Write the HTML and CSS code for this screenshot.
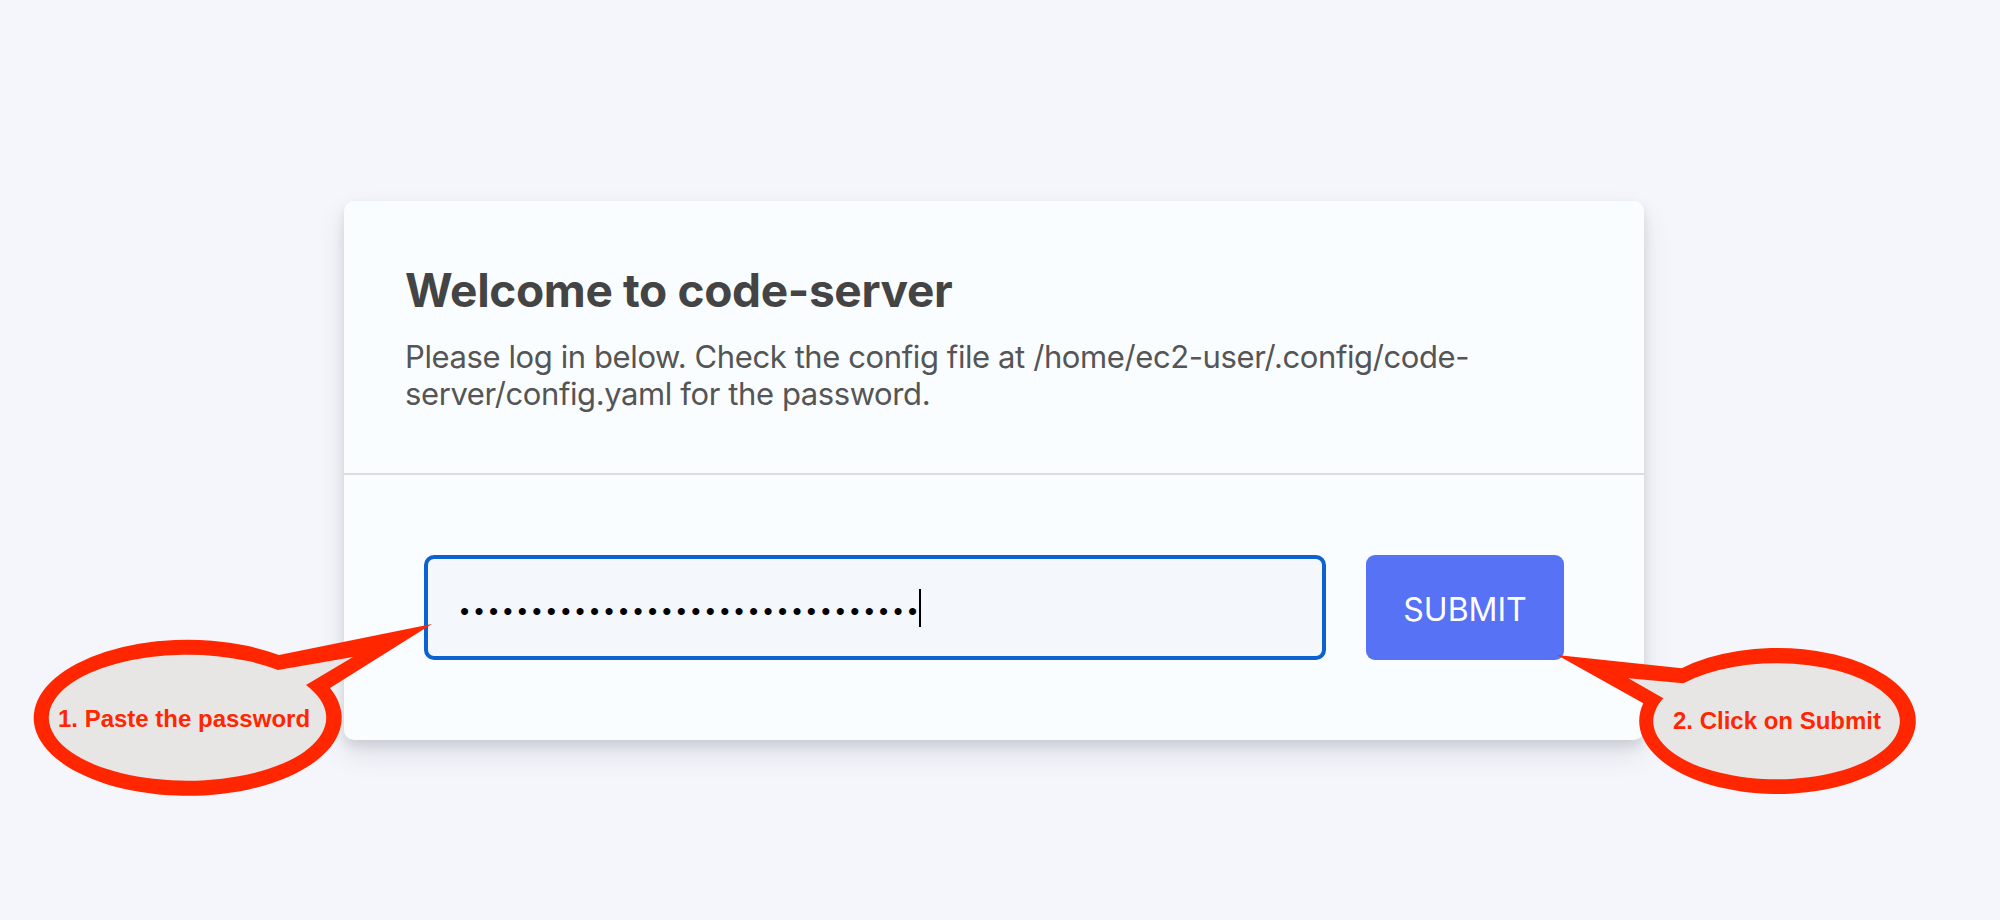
FILE: index.html
```html
<!DOCTYPE html>
<html lang="en">
<head>
<meta charset="utf-8">
<title>code-server login</title>
<link rel="stylesheet" href="styles.css">
</head>
<body>
<div class="page">
  <div class="card">
    <div class="header">
      <h1 class="main">Welcome to code-server</h1>
      <div class="sub">Please log in below. Check the config file at /home/ec2-user/.config/code-server/config.yaml for the password.</div>
    </div>
    <div class="content">
      <form class="login-form">
        <div class="field">
          <div class="password"><span class="dots">••••••••••••••••••••••••••••••••</span><span class="caret"></span></div>
          <button type="button" class="submit">SUBMIT</button>
        </div>
      </form>
    </div>
  </div>
</div>
<svg class="callouts" width="2000" height="920" viewBox="0 0 2000 920">
  <path class="bubble-stroke" d="M279 655 L432 624 L330 688 A154 78 0 1 1 279 655 Z"/>
  <path class="bubble-fill" d="M278 670 L353 657 L306 685 A138.7 63 0 1 1 278 670 Z"/>
  <text class="bubble-text" x="184" y="727">1. Paste the password</text>
  <path class="bubble-stroke" d="M1681.7 668.3 L1557 655 L1643.3 703.3 A138.3 73 0 1 0 1681.7 668.3 Z"/>
  <path class="bubble-fill" d="M1683.3 683.3 L1628.3 678.3 L1663.3 698.3 A123.3 58 0 1 0 1683.3 683.3 Z"/>
  <text class="bubble-text" x="1777" y="729">2. Click on Submit</text>
</svg>
</body>
</html>
```
FILE: styles.css
```css
html, body {
  margin: 0;
  padding: 0;
  background-color: #f4f6fb;
  width: 2000px;
  height: 920px;
  overflow: hidden;
}
body {
  position: relative;
  font-family: Inter, "Noto Sans", "Liberation Sans", sans-serif;
}
.page {
  display: flex;
  flex-direction: column;
  align-items: flex-start;
  padding: 201px 0 0 344px;
}
.card {
  width: 1300px;
  background-color: #fafdff;
  border-radius: 10px;
  box-shadow: 0 14px 28px rgba(60, 66, 87, 0.12), 0 6px 12px rgba(0, 0, 0, 0.10);
}
.header {
  padding: 61px 60px 61px 61px;
  border-bottom: 2px solid #dcdcdc;
  color: #444;
}
.main {
  margin: 0;
  font-size: 46px;
  line-height: 56px;
  font-weight: 700;
  letter-spacing: -0.35px;
}
.sub {
  margin-top: 20px;
  color: #555;
  font-size: 31px;
  line-height: 37px;
  letter-spacing: -0.4px;
}
.content {
  padding: 80px;
}
.field {
  display: flex;
  gap: 40px;
  height: 105px;
}
.password {
  flex: 1;
  display: flex;
  align-items: center;
  box-sizing: border-box;
  background-color: #f4f7fc;
  border: 4px solid #0b62d0;
  border-radius: 10px;
  padding: 0 0 0 32px;
}
.dots {
  font-family: "Liberation Sans", sans-serif;
  font-size: 26px;
  line-height: 1;
  letter-spacing: 5.35px;
  color: #000;
  position: relative;
  top: 3px;
}
.caret {
  width: 2px;
  height: 38px;
  background: #000;
  margin-left: -3px;
}
.submit {
  width: 198px;
  border: none;
  border-radius: 9px;
  background-color: #5772f5;
  color: #fff;
  font-family: Inter, "Liberation Sans", sans-serif;
  font-size: 32px;
  font-weight: 400;
  padding: 4px 0 0 0;
}
.callouts {
  position: absolute;
  left: 0;
  top: 0;
  pointer-events: none;
}
.bubble-stroke {
  fill: #ff2600;
}
.bubble-fill {
  fill: #e7e6e5;
}
.bubble-text {
  fill: #ff2600;
  font-family: "Liberation Sans", Arial, sans-serif;
  font-weight: 700;
  font-size: 24px;
  text-anchor: middle;
}
```
